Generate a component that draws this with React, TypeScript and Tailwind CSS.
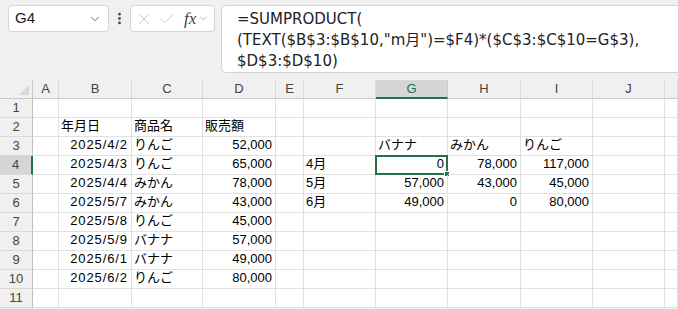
import { Check, ChevronDown, EllipsisVertical, X } from "lucide-react";

type Cell = { v: string; num?: boolean; date?: boolean };

const COLS = ["A", "B", "C", "D", "E", "F", "G", "H", "I", "J", ""];

// 行ごとのセル内容 (列文字 -> 値)
const ROWS: Record<string, Cell>[] = [
    {},
    { B: { v: "年月日" }, C: { v: "商品名" }, D: { v: "販売額" } },
    { B: { v: "2025/4/2", num: true, date: true }, C: { v: "りんご" }, D: { v: "52,000", num: true }, G: { v: "バナナ" }, H: { v: "みかん" }, I: { v: "りんご" } },
    { B: { v: "2025/4/3", num: true, date: true }, C: { v: "りんご" }, D: { v: "65,000", num: true }, F: { v: "4月" }, G: { v: "0", num: true }, H: { v: "78,000", num: true }, I: { v: "117,000", num: true } },
    { B: { v: "2025/4/4", num: true, date: true }, C: { v: "みかん" }, D: { v: "78,000", num: true }, F: { v: "5月" }, G: { v: "57,000", num: true }, H: { v: "43,000", num: true }, I: { v: "45,000", num: true } },
    { B: { v: "2025/5/7", num: true, date: true }, C: { v: "みかん" }, D: { v: "43,000", num: true }, F: { v: "6月" }, G: { v: "49,000", num: true }, H: { v: "0", num: true }, I: { v: "80,000", num: true } },
    { B: { v: "2025/5/8", num: true, date: true }, C: { v: "りんご" }, D: { v: "45,000", num: true } },
    { B: { v: "2025/5/9", num: true, date: true }, C: { v: "バナナ" }, D: { v: "57,000", num: true } },
    { B: { v: "2025/6/1", num: true, date: true }, C: { v: "バナナ" }, D: { v: "49,000", num: true } },
    { B: { v: "2025/6/2", num: true, date: true }, C: { v: "りんご" }, D: { v: "80,000", num: true } },
    {},
];

function FormulaBar() {
    return (
        <div className="h-[80px] bg-[#f0f0f0] flex items-start pt-[5px] pl-2">
            <div className="w-[101px] h-[27px] bg-white border border-[#d4d4d4] rounded-[4px] flex items-center justify-between pl-[6px] pr-[6px]">
                <span className="text-[15px] text-[#222]">G4</span>
                <ChevronDown size={14} strokeWidth={1.5} className="text-[#555]" />
            </div>
            <div className="w-[21px] h-[27px] flex items-center justify-center">
                <EllipsisVertical size={15} strokeWidth={2.5} className="text-[#444]" />
            </div>
            <div className="w-[85px] h-[27px] bg-white border border-[#d4d4d4] rounded-[4px] flex items-center pl-[4px]">
                <X size={18} strokeWidth={1} className="text-[#b8b8b8]" />
                <Check size={18} strokeWidth={1} className="text-[#b8b8b8] ml-[5px]" />
                <span className="ml-[8px] text-[17px] italic text-[#444] font-['Liberation_Serif',serif] leading-none">fx</span>
                <ChevronDown size={11} strokeWidth={1.2} className="text-[#777] ml-[2px]" />
            </div>
            <div className="flex-1 h-[68px] ml-[6px] -mr-2 bg-white border border-[#d4d4d4] rounded-[5px] pl-[15px] pt-[3px] text-[15px] leading-[21px] text-[#222] font-['DejaVu_Sans','Noto_Sans_CJK_JP',sans-serif]">
                <div>=SUMPRODUCT(</div>
                <div>(TEXT($B$3:$B$10,"m月")=$F4)*($C$3:$C$10=G$3),</div>
                <div>$D$3:$D$10)</div>
            </div>
        </div>
    );
}

function Sheet() {
    return (
        <div className="grid grid-cols-[33px_26px_73px_71px_73px_28px_72px_72px_73px_72px_72px_1fr] auto-rows-[19px] bg-white text-[13px] text-black">
            {/* 左上の角 */}
            <div className="bg-[#f0f0f0] border-r border-b border-[#c8c8c8] relative">
                <svg className="absolute right-[3px] bottom-[3px]" width="10" height="10" viewBox="0 0 10 10">
                    <path d="M10 0 L10 10 L0 10 Z" fill="#d9d9d9" />
                </svg>
            </div>
            {COLS.map((c) =>
                c === "G" ? (
                    <div key={c} className="bg-[#d6d6d6] border-r border-[#c8c8c8] border-b-2 border-b-[#217346] flex items-center justify-center text-[#217346]">
                        {c}
                    </div>
                ) : (
                    <div key={c || "K"} className="bg-[#f0f0f0] border-r border-[#d9d9d9] border-b border-b-[#c8c8c8] flex items-center justify-center text-[#444]">
                        {c}
                    </div>
                )
            )}
            {ROWS.map((row, i) => {
                const n = i + 1;
                return [
                    <div
                        key={`h${n}`}
                        className={
                            n === 4
                                ? "bg-[#d6d6d6] border-r-2 border-r-[#217346] border-b border-b-[#d9d9d9] flex items-center justify-center text-[#444]"
                                : "bg-[#f0f0f0] border-r border-r-[#c0c0c0] border-b border-b-[#d9d9d9] flex items-center justify-center text-[#444]"
                        }
                    >
                        {n}
                    </div>,
                    ...COLS.map((c, j) => {
                        const cell = c ? row[c] : undefined;
                        const selected = n === 4 && c === "G";
                        return (
                            <div
                                key={`${n}-${j}`}
                                className={`relative border-r border-b border-[#e1e1e1] flex items-end pb-[1px] whitespace-nowrap ${cell?.num ? "justify-end pr-[3px]" : "pl-[2px]"} ${cell?.date ? "tracking-[0.9px]" : ""}`}
                            >
                                {cell?.v}
                                {selected && (
                                    <div className="absolute -left-px -top-px -right-px -bottom-px border-2 border-[#217346]">
                                        <div className="absolute -right-[4px] -bottom-[4px] w-[6px] h-[6px] bg-[#217346] border border-white" />
                                    </div>
                                )}
                            </div>
                        );
                    }),
                ];
            })}
        </div>
    );
}

export default function App() {
    return (
        <div className="w-[678px] h-[309px] overflow-hidden bg-[#f0f0f0] font-['Liberation_Sans','Noto_Sans_CJK_JP',sans-serif]">
            <FormulaBar />
            <Sheet />
        </div>
    );
}
